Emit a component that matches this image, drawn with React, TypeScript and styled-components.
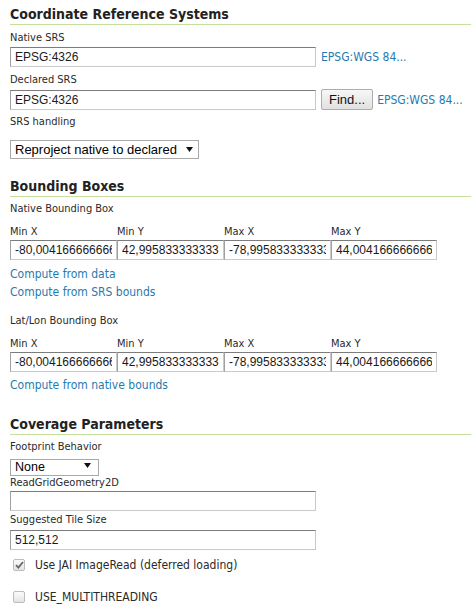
import React from 'react';
import styled, { createGlobalStyle } from 'styled-components';

const Global = createGlobalStyle`
  html, body { margin: 0; padding: 0; background: #fff; }
  body {
    font-family: "DejaVu Sans Condensed", "DejaVu Sans", sans-serif;
    color: #2e2e2e;
  }
`;

const Page = styled.div`
  width: 471px;
  box-sizing: border-box;
  padding: 0 0 0 10px;
`;

const Heading = styled.h2<{ $top: number }>`
  margin: ${(p) => p.$top}px 0 0 0;
  padding: 0 0 1px 0;
  font: bold 14px/18px "DejaVu Sans Condensed", "DejaVu Sans", sans-serif;
  color: #222;
  border-bottom: 1px solid #c5e09c;
`;

const Label = styled.label<{ $top?: number }>`
  display: block;
  margin-top: ${(p) => p.$top ?? 0}px;
  font-size: 11px;
  line-height: 14px;
  color: #2a2a2a;
  white-space: nowrap;
`;

const Row = styled.div<{ $top?: number }>`
  display: flex;
  align-items: center;
  gap: 5px;
  margin-top: ${(p) => p.$top ?? 0}px;
`;

const TextInput = styled.input<{ $w?: string; $top?: number }>`
  display: block;
  box-sizing: border-box;
  width: ${(p) => p.$w ?? '306px'};
  height: 20px;
  margin: ${(p) => p.$top ?? 0}px 0 0 0;
  padding: 0 4px;
  border: 1px solid #c9c9c9;
  border-top-color: #7c7c7c;
  border-left-color: #a0a0a0;
  font: 12px "Liberation Sans", Arial, sans-serif;
  color: #1a1a1a;
  background: #fff;
  outline: none;
`;

const Link = styled.a<{ $top?: number }>`
  display: block;
  width: fit-content;
  margin-top: ${(p) => p.$top ?? 0}px;
  font-size: 12px;
  line-height: 18px;
  color: #1f7bb0;
  text-decoration: none;
  white-space: nowrap;
  cursor: pointer;
`;

const Button = styled.button`
  box-sizing: border-box;
  height: 21px;
  margin: 0 -1px 0 0;
  padding: 0 7px;
  border: 1px solid #adadad;
  border-radius: 2px;
  background: linear-gradient(#f7f7f7, #e1e1e1);
  font: 13px "Liberation Sans", Arial, sans-serif;
  color: #111;
`;

const SelectWrap = styled.div<{ $w: number; $h: number; $top: number }>`
  position: relative;
  width: ${(p) => p.$w}px;
  height: ${(p) => p.$h}px;
  margin-top: ${(p) => p.$top}px;
`;

const Select = styled.select<{ $size: number }>`
  appearance: none;
  -webkit-appearance: none;
  box-sizing: border-box;
  width: 100%;
  height: 100%;
  margin: 0;
  padding: 0 0 0 4px;
  border: 1px solid #a9a9a9;
  border-radius: 0;
  background: #fff;
  font: ${(p) => p.$size}px "Liberation Sans", Arial, sans-serif;
  color: #000;
  outline: none;
`;

const Arrow = styled.svg<{ $right: number }>`
  position: absolute;
  right: ${(p) => p.$right}px;
  top: 50%;
  margin-top: -2px;
  pointer-events: none;
`;

const BoxGrid = styled.div<{ $top: number }>`
  display: grid;
  grid-template-columns: 107px 107px 107px 106px;
  row-gap: 1px;
  margin-top: ${(p) => p.$top}px;
`;

const CheckRow = styled.label<{ $top: number }>`
  display: flex;
  align-items: center;
  gap: 10px;
  height: 18px;
  margin-top: ${(p) => p.$top}px;
  padding-left: 3px;
  font-size: 12px;
  color: #2a2a2a;
`;

const Box = styled.span`
  display: flex;
  align-items: center;
  justify-content: center;
  box-sizing: border-box;
  width: 12px;
  height: 12px;
  border: 1px solid #bcbcbc;
  border-radius: 2px;
  background: linear-gradient(#fbfbfb, #e4e4e4);
`;

const DropArrow: React.FC<{ right: number }> = ({ right }) => (
  <Arrow $right={right} width="7" height="5" viewBox="0 0 7 5">
    <polygon points="0,0 7,0 3.5,5" fill="#111" />
  </Arrow>
);

const Check: React.FC<{ checked?: boolean }> = ({ checked }) => (
  <Box>
    {checked && (
      <svg width="9" height="8" viewBox="0 0 9 8">
        <path d="M1 4.2 L3.4 6.6 L8 1" fill="none" stroke="#6a6a6a" strokeWidth="1.9" />
      </svg>
    )}
  </Box>
);

type BBox = { minx: string; miny: string; maxx: string; maxy: string };

const BoundsGrid: React.FC<{ top: number; b: BBox }> = ({ top, b }) => (
  <BoxGrid $top={top}>
    <Label>Min X</Label>
    <Label>Min Y</Label>
    <Label>Max X</Label>
    <Label>Max Y</Label>
    <TextInput $w="100%" defaultValue={b.minx} />
    <TextInput $w="100%" defaultValue={b.miny} />
    <TextInput $w="100%" defaultValue={b.maxx} />
    <TextInput $w="100%" defaultValue={b.maxy} />
  </BoxGrid>
);

const bounds: BBox = {
  minx: '-80,004166666666',
  miny: '42,995833333333',
  maxx: '-78,995833333333',
  maxy: '44,004166666666',
};

export default function App() {
  return (
    <Page>
      <Global />
      <Heading $top={5}>Coordinate Reference Systems</Heading>
      <Label $top={6}>Native SRS</Label>
      <Row $top={2}>
        <TextInput defaultValue="EPSG:4326" />
        <Link>EPSG:WGS 84...</Link>
      </Row>
      <Label $top={6}>Declared SRS</Label>
      <Row $top={2}>
        <TextInput defaultValue="EPSG:4326" />
        <Button>Find...</Button>
        <Link>EPSG:WGS 84...</Link>
      </Row>
      <Label $top={5}>SRS handling</Label>
      <SelectWrap $w={189} $h={19} $top={10}>
        <Select $size={13} defaultValue="reproject">
          <option value="reproject">Reproject native to declared</option>
          <option value="force">Force declared</option>
          <option value="keep">Keep native</option>
        </Select>
        <DropArrow right={6} />
      </SelectWrap>

      <Heading $top={19}>Bounding Boxes</Heading>
      <Label $top={5}>Native Bounding Box</Label>
      <BoundsGrid top={9} b={bounds} />
      <Link $top={5}>Compute from data</Link>
      <Link>Compute from SRS bounds</Link>
      <Label $top={13}>Lat/Lon Bounding Box</Label>
      <BoundsGrid top={9} b={bounds} />
      <Link $top={4}>Compute from native bounds</Link>

      <Heading $top={21}>Coverage Parameters</Heading>
      <Label $top={5}>Footprint Behavior</Label>
      <SelectWrap $w={89} $h={17} $top={2}>
        <Select $size={12.5} defaultValue="none">
          <option value="none">None</option>
          <option value="transparent">Transparent</option>
          <option value="cut">Cut</option>
        </Select>
        <DropArrow right={8} />
      </SelectWrap>
      <Label $top={3}>ReadGridGeometry2D</Label>
      <TextInput $top={1} defaultValue="" />
      <Label $top={2}>Suggested Tile Size</Label>
      <TextInput $top={3} defaultValue="512,512" />
      <CheckRow $top={6}>
        <Check checked />
        Use JAI ImageRead (deferred loading)
      </CheckRow>
      <CheckRow $top={14}>
        <Check />
        USE_MULTITHREADING
      </CheckRow>
    </Page>
  );
}
